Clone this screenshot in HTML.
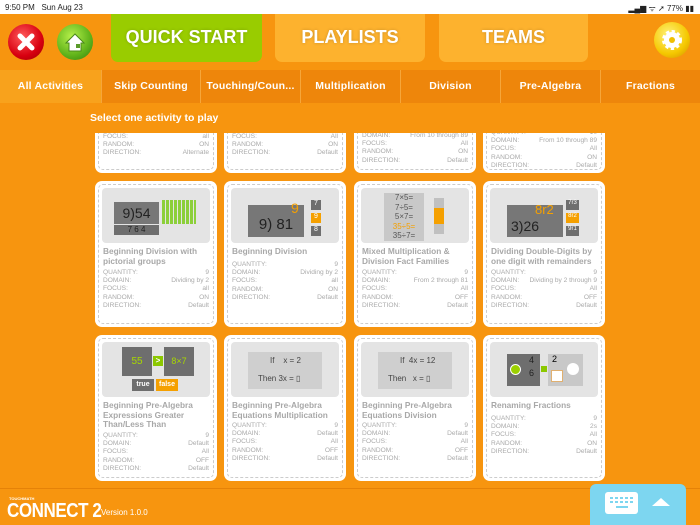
<!DOCTYPE html>
<html><head><meta charset="utf-8"><style>
*{margin:0;padding:0;box-sizing:border-box}
body{width:700px;height:525px;overflow:hidden;background:#f7950f;font-family:"Liberation Sans",sans-serif;position:relative}
.status{position:absolute;left:0;top:0;width:700px;height:14px;background:#fff;font-size:8px;color:#222;padding:3px 5px}
.status .r{position:absolute;right:6px;top:3px}
.btn{position:absolute;top:24px;width:36px;height:36px;border-radius:50%}
.tab{position:absolute;top:14px;height:48px;border-radius:0 0 7px 7px;color:#fff;font-weight:bold;font-size:18px;text-align:center;line-height:46px;text-shadow:0 0 3px rgba(0,0,0,.2)}
.nav{position:absolute;top:70px;left:0;width:700px;height:33px;background:#ee860b}
.nav div{position:absolute;top:0;height:33px;line-height:33px;text-align:center;color:#fff;font-weight:bold;font-size:10.5px;border-left:1px solid #f6a63a;letter-spacing:.2px}
.sel{position:absolute;left:90px;top:112px;color:#fff;font-size:10.5px;font-weight:bold}
.scroll{position:absolute;left:88px;top:133px;width:524px;height:350px;overflow:hidden}
.card{position:absolute;width:122px;height:146px;background:#fff;border-radius:7px}
.card:after{content:"";position:absolute;left:3px;top:3px;right:3px;bottom:3px;border:1px dashed #ccc;border-radius:5px}
.img{position:absolute;left:7px;top:7px;width:108px;height:55px;background:#e4e4e4;border-radius:4px;overflow:hidden}
.t{position:absolute;left:8px;top:66px;width:108px;font-size:8.3px;font-weight:bold;color:#a8a8a8;line-height:9.5px}
.f{position:absolute;left:8px;width:106px;font-size:6.6px;color:#aaa;line-height:8.2px}
.f p{display:flex;justify-content:space-between}
.dk{position:absolute;background:#6e6e6e;color:#222;text-align:center}
.bottom{position:absolute;left:0;top:488px;width:700px;height:37px;border-top:1px solid #e58208}
.kb{position:absolute;left:590px;top:484px;width:96px;height:41px;background:#7dd6f0;border-radius:6px 6px 0 0}
</style></head><body>
<div class="status">9:50 PM&nbsp;&nbsp;&nbsp;Sun Aug 23<span class="r">▂▄▆ ᯤ ➚ 77% ▮▮</span></div>
<div class="btn" style="left:8px;background:radial-gradient(circle at 40% 35%,#ff5a5a,#d80010 60%,#900);"><svg width="36" height="36"><path d="M12 12L24 24M24 12L12 24" stroke="#fff" stroke-width="5" stroke-linecap="round"/></svg></div>
<div class="btn" style="left:57px;background:radial-gradient(circle at 40% 35%,#b6f04a,#5fb21a 60%,#2e7a10);"><svg width="36" height="36"><path d="M9 19L18 10L27 19H24V27H12V19Z" fill="#fff" stroke="#4a8a1a" stroke-width="1"/><rect x="19" y="20" width="4" height="4" fill="#5a9a2a"/></svg></div>
<div class="tab" style="left:111px;width:151px;background:#99cc00">QUICK START</div>
<div class="tab" style="left:275px;width:150px;background:#fdb22e">PLAYLISTS</div>
<div class="tab" style="left:439px;width:149px;background:#fdb22e">TEAMS</div>
<div class="btn" style="left:654px;top:22px;background:radial-gradient(circle at 40% 35%,#fff27a,#f5c800 60%,#d08a00);"><svg width="36" height="36"><circle cx="18" cy="18" r="8" fill="#fff" stroke="#fff" stroke-width="4" stroke-dasharray="3 2.3"/><circle cx="18" cy="18" r="3" fill="#f0c000"/></svg></div>
<div class="nav">
<div style="left:0;width:101px;background:#f8a21c;border:none">All Activities</div>
<div style="left:101px;width:99px">Skip Counting</div>
<div style="left:200px;width:100px">Touching/Coun...</div>
<div style="left:300px;width:100px">Multiplication</div>
<div style="left:400px;width:100px">Division</div>
<div style="left:500px;width:100px">Pre-Algebra</div>
<div style="left:600px;width:100px">Fractions</div>
</div>
<div class="sel">Select one activity to play</div>
<div class="scroll">
<div class="card" style="left:7px;top:-106px"><div class="f" style="top:106px;height:24px"><p><span>FOCUS:</span><span>all</span></p><p><span>RANDOM:</span><span>ON</span></p><p><span>DIRECTION:</span><span>Alternate</span></p></div></div>
<div class="card" style="left:136px;top:-106px"><div class="f" style="top:106px"><p><span>FOCUS:</span><span>All</span></p><p><span>RANDOM:</span><span>ON</span></p><p><span>DIRECTION:</span><span>Default</span></p></div></div>
<div class="card" style="left:266px;top:-106px"><div class="f" style="top:105px"><p><span>DOMAIN:</span><span>From 10 through 89</span></p><p><span>FOCUS:</span><span>All</span></p><p><span>RANDOM:</span><span>ON</span></p><p><span>DIRECTION:</span><span>Default</span></p></div></div>
<div class="card" style="left:395px;top:-106px"><div class="f" style="top:102px"><p><span>QUANTITY:</span><span>10</span></p><p><span>DOMAIN:</span><span>From 10 through 89</span></p><p><span>FOCUS:</span><span>All</span></p><p><span>RANDOM:</span><span>ON</span></p><p><span>DIRECTION:</span><span>Default</span></p></div></div>
<div class="card" style="left:7px;top:48px"><div class="img"><div class="dk" style="left:12px;top:14px;width:45px;height:22px;font-size:14px;line-height:22px;background:#777">9)54</div><div class="dk" style="left:12px;top:37px;width:45px;height:10px;font-size:8px;line-height:10px">7 6 4</div><div style="position:absolute;left:60px;top:12px;width:34px;height:24px;background:repeating-linear-gradient(90deg,#8ccf3a 0 3px,#e4e4e4 3px 4px)"></div></div><div class="t">Beginning Division with pictorial groups</div><div class="f" style="top:88px"><p><span>QUANTITY:</span><span>9</span></p><p><span>DOMAIN:</span><span>Dividing by 2</span></p><p><span>FOCUS:</span><span>all</span></p><p><span>RANDOM:</span><span>ON</span></p><p><span>DIRECTION:</span><span>Default</span></p></div></div>
<div class="card" style="left:136px;top:48px"><div class="img"><div class="dk" style="left:17px;top:17px;width:56px;height:32px;background:#777;font-size:15px;line-height:40px">9) 81</div><div style="position:absolute;left:60px;top:12px;color:#f5a000;font-size:14px">9</div><div class="dk" style="left:80px;top:12px;width:10px;height:10px;font-size:7px;color:#fff">7</div><div class="dk" style="left:80px;top:25px;width:10px;height:10px;font-size:7px;background:#f5a000;color:#fff">9</div><div class="dk" style="left:80px;top:38px;width:10px;height:10px;font-size:7px;color:#fff">8</div></div><div class="t">Beginning Division</div><div class="f" style="top:80px"><p><span>QUANTITY:</span><span>9</span></p><p><span>DOMAIN:</span><span>Dividing by 2</span></p><p><span>FOCUS:</span><span>all</span></p><p><span>RANDOM:</span><span>ON</span></p><p><span>DIRECTION:</span><span>Default</span></p></div></div>
<div class="card" style="left:266px;top:48px"><div class="img"><div style="position:absolute;left:23px;top:5px;width:40px;height:48px;background:#c8c8c8;font-size:8px;color:#555;line-height:9.5px;text-align:center">7×5=<br>7÷5=<br>5×7=<br><span style="color:#f5a000">35÷5=</span><br>35÷7=</div><div style="position:absolute;left:73px;top:10px;width:10px;height:36px;background:#c0c0c0"></div><div style="position:absolute;left:73px;top:20px;width:10px;height:16px;background:#f5a000"></div></div><div class="t">Mixed Multiplication &amp; Division Fact Families</div><div class="f" style="top:88px"><p><span>QUANTITY:</span><span>9</span></p><p><span>DOMAIN:</span><span>From 2 through 81</span></p><p><span>FOCUS:</span><span>All</span></p><p><span>RANDOM:</span><span>OFF</span></p><p><span>DIRECTION:</span><span>Default</span></p></div></div>
<div class="card" style="left:395px;top:48px"><div class="img"><div class="dk" style="left:17px;top:17px;width:56px;height:32px;background:#777;font-size:14px;line-height:42px;text-align:left;padding-left:4px">3)26</div><div style="position:absolute;left:45px;top:14px;color:#f5a000;font-size:13px">8r2</div><div class="dk" style="left:76px;top:12px;width:13px;height:10px;font-size:6px;color:#fff">7r3</div><div class="dk" style="left:76px;top:25px;width:13px;height:10px;font-size:6px;background:#f5a000;color:#fff">8r2</div><div class="dk" style="left:76px;top:38px;width:13px;height:10px;font-size:6px;color:#fff">9r1</div></div><div class="t">Dividing Double-Digits by one digit with remainders</div><div class="f" style="top:88px"><p><span>QUANTITY:</span><span>9</span></p><p><span>DOMAIN:</span><span>Dividing by 2 through 9</span></p><p><span>FOCUS:</span><span>All</span></p><p><span>RANDOM:</span><span>OFF</span></p><p><span>DIRECTION:</span><span>Default</span></p></div></div>
<div class="card" style="left:7px;top:202px"><div class="img"><div class="dk" style="left:20px;top:5px;width:30px;height:29px;color:#a8d800;font-size:10px;line-height:29px">55</div><div style="position:absolute;left:51px;top:14px;width:10px;height:10px;background:#8cc800;color:#fff;font-size:8px;text-align:center;font-weight:bold">&gt;</div><div class="dk" style="left:62px;top:5px;width:30px;height:29px;color:#a8d800;font-size:9px;line-height:29px">8×7</div><div class="dk" style="left:30px;top:37px;width:22px;height:12px;color:#fff;font-size:7px;font-weight:bold;line-height:12px">true</div><div class="dk" style="left:54px;top:37px;width:22px;height:12px;color:#fff;font-size:7px;font-weight:bold;line-height:12px;background:#f5a000">false</div></div><div class="t">Beginning Pre-Algebra Expressions Greater Than/Less Than</div><div class="f" style="top:97px"><p><span>QUANTITY:</span><span>9</span></p><p><span>DOMAIN:</span><span>Default</span></p><p><span>FOCUS:</span><span>All</span></p><p><span>RANDOM:</span><span>OFF</span></p><p><span>DIRECTION:</span><span>Default</span></p></div></div>
<div class="card" style="left:136px;top:202px"><div class="img"><div style="position:absolute;left:17px;top:10px;width:74px;height:37px;background:#cfcfcf;font-size:8px;color:#444;line-height:18px;padding-left:22px">If &nbsp;&nbsp;&nbsp;x = 2<br><span style="margin-left:-12px">Then 3x = ▯</span></div></div><div class="t">Beginning Pre-Algebra Equations Multiplication</div><div class="f" style="top:87px"><p><span>QUANTITY:</span><span>9</span></p><p><span>DOMAIN:</span><span>Default</span></p><p><span>FOCUS:</span><span>All</span></p><p><span>RANDOM:</span><span>OFF</span></p><p><span>DIRECTION:</span><span>Default</span></p></div></div>
<div class="card" style="left:266px;top:202px"><div class="img"><div style="position:absolute;left:17px;top:10px;width:74px;height:37px;background:#cfcfcf;font-size:8px;color:#444;line-height:18px;padding-left:22px">If &nbsp;4x = 12<br><span style="margin-left:-12px">Then &nbsp;&nbsp;x = ▯</span></div></div><div class="t">Beginning Pre-Algebra Equations Division</div><div class="f" style="top:87px"><p><span>QUANTITY:</span><span>9</span></p><p><span>DOMAIN:</span><span>Default</span></p><p><span>FOCUS:</span><span>All</span></p><p><span>RANDOM:</span><span>OFF</span></p><p><span>DIRECTION:</span><span>Default</span></p></div></div>
<div class="card" style="left:395px;top:202px"><div class="img"><div class="dk" style="left:17px;top:12px;width:33px;height:32px;font-size:9px;line-height:13px;text-align:right;padding-right:6px">4<br>6</div><div style="position:absolute;left:20px;top:22px;width:11px;height:11px;border-radius:50%;background:#9cd000;border:1px solid #fff"></div><div style="position:absolute;left:51px;top:24px;width:6px;height:6px;background:#8cc800"></div><div style="position:absolute;left:58px;top:12px;width:35px;height:32px;background:#c8c8c8;font-size:9px;padding-left:4px">2</div><div style="position:absolute;left:61px;top:28px;width:12px;height:12px;background:#fff;border:1px solid #e0b070"></div><div style="position:absolute;left:77px;top:21px;width:12px;height:12px;border-radius:50%;background:#fff"></div></div><div class="t">Renaming Fractions</div><div class="f" style="top:80px"><p><span>QUANTITY:</span><span>9</span></p><p><span>DOMAIN:</span><span>2s</span></p><p><span>FOCUS:</span><span>All</span></p><p><span>RANDOM:</span><span>ON</span></p><p><span>DIRECTION:</span><span>Default</span></p></div></div>
</div>
<div class="bottom"></div>
<div style="position:absolute;left:7px;top:500px;color:#fff;font-weight:bold;font-size:20px;letter-spacing:-0.5px;transform:scaleX(0.85);transform-origin:0 0;white-space:nowrap">CONNECT 2</div>
<div style="position:absolute;left:9px;top:496px;color:#fff;font-size:4px;font-weight:bold">TOUCHMATH</div>
<div style="position:absolute;left:101px;top:508px;color:#fff;font-size:8px">Version 1.0.0</div>
<div class="kb"><div style="position:absolute;left:15px;top:8px;width:33px;height:22px;background:#fff;border-radius:3px"></div><svg style="position:absolute;left:18px;top:11px" width="28" height="16"><g fill="#7dd6f0"><rect x="2" y="2" width="3" height="2"/><rect x="7" y="2" width="3" height="2"/><rect x="12" y="2" width="3" height="2"/><rect x="17" y="2" width="3" height="2"/><rect x="22" y="2" width="3" height="2"/><rect x="2" y="6" width="3" height="2"/><rect x="7" y="6" width="3" height="2"/><rect x="12" y="6" width="3" height="2"/><rect x="17" y="6" width="3" height="2"/><rect x="22" y="6" width="3" height="2"/><rect x="8" y="11" width="12" height="2"/></g></svg><svg style="position:absolute;left:62px;top:13px" width="18" height="10"><path d="M0 9L9 1L18 9Z" fill="#fff"/></svg></div>
</body></html>
